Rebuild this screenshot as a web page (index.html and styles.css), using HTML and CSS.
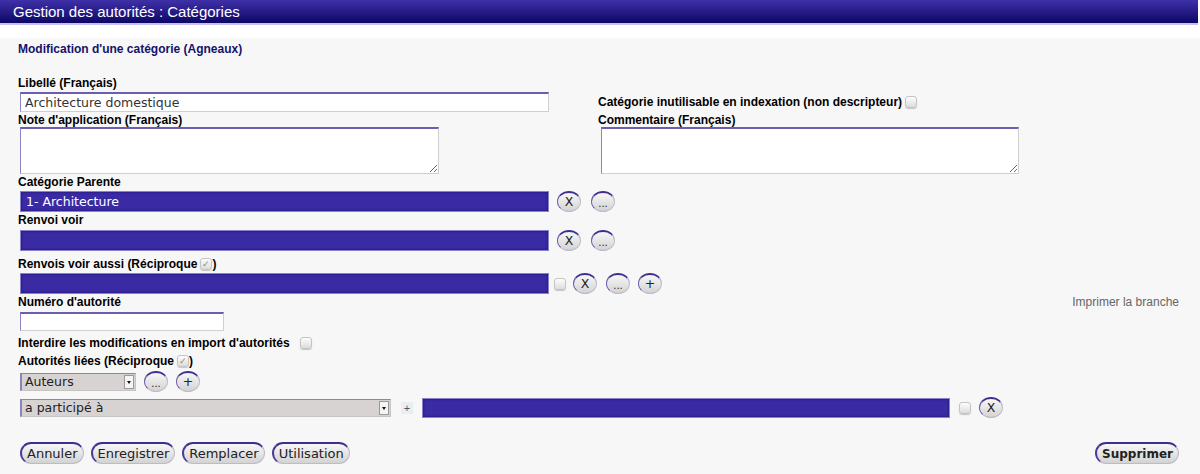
FILE: index.html
```html
<!DOCTYPE html>
<html lang="fr">
<head>
<meta charset="utf-8">
<title>Gestion des autorités : Catégories</title>
<link rel="stylesheet" href="styles.css">
</head>
<body>
<div class="header">Gestion des autorités : Catégories</div>
<div class="content">
  <div class="title">Modification d'une catégorie (Agneaux)</div>

  <div class="two row1">
    <div class="col">
      <div class="lbl">Libellé (Français)</div>
      <input class="txt libelle" type="text" value="Architecture domestique">
    </div>
    <div class="col right r1">
      <div class="lbl">Catégorie inutilisable en indexation (non descripteur)<span class="cb g3"></span></div>
    </div>
  </div>

  <div class="two row2">
    <div class="col">
      <div class="lbl">Note d'application (Français)</div>
      <textarea class="area"></textarea>
    </div>
    <div class="col right">
      <div class="lbl">Commentaire (Français)</div>
      <textarea class="area area-r"></textarea>
    </div>
  </div>

  <div class="lbl m1">Catégorie Parente</div>
  <div class="line m2">
    <input class="sel" type="text" value="1- Architecture">
    <span class="rbtn g8">X</span>
    <span class="rbtn dots g10">...</span>
  </div>

  <div class="lbl m1">Renvoi voir</div>
  <div class="line m3">
    <input class="sel" type="text" value="">
    <span class="rbtn g8">X</span>
    <span class="rbtn dots g10">...</span>
  </div>

  <div class="lbl m6">Renvois voir aussi (Réciproque<span class="cb on g3">&#10003;</span>)</div>
  <div class="line m2">
    <input class="sel" type="text" value="">
    <span class="cb g5"></span>
    <span class="rbtn g7">X</span>
    <span class="rbtn dots g9">...</span>
    <span class="rbtn g8">+</span>
  </div>

  <div class="numrow m1">
    <div>
      <div class="lbl">Numéro d'autorité</div>
      <input class="txt num" type="text" value="">
    </div>
    <div class="print">Imprimer la branche</div>
  </div>

  <div class="lbl m5">Interdire les modifications en import d'autorités<span class="cb g10"></span></div>
  <div class="lbl m4">Autorités liées (Réciproque<span class="cb on g3">&#10003;</span>)</div>

  <div class="line m3">
    <div class="select s-aut"><span class="sv">Auteurs</span><span class="arr"></span></div>
    <span class="rbtn dots g8">...</span>
    <span class="rbtn g8">+</span>
  </div>

  <div class="line m5">
    <div class="select s-rel"><span class="sv">a participé à</span><span class="arr"></span></div>
    <span class="plus g10">+</span>
    <input class="sel sel2" type="text" value="">
    <span class="cb g9"></span>
    <span class="rbtn g8">X</span>
  </div>

  <div class="actions">
    <div class="left-actions">
      <span class="btn">Annuler</span>
      <span class="btn">Enregistrer</span>
      <span class="btn">Remplacer</span>
      <span class="btn">Utilisation</span>
    </div>
    <span class="btn bold">Supprimer</span>
  </div>
</div>
</body>
</html>
```

FILE: styles.css
```css
html, body {
  margin: 0;
  padding: 0;
  background: #ffffff;
  font-family: "Liberation Sans", Arial, sans-serif;
  color: #000;
}

.header {
  height: 23px;
  margin-right: 2px;
  background: linear-gradient(#3f31a8, #0d0766);
  border-bottom: 2px solid #c6bff0;
  color: #ffffff;
  font-size: 15px;
  line-height: 23px;
  padding-left: 13px;
}

.content {
  margin-top: 13px;
  background: #f7f7f7;
  padding: 4px 21px 0 18px;
  height: 436px;
  box-sizing: border-box;
}

.title {
  font-size: 12px;
  font-weight: bold;
  color: #16126a;
  line-height: 14px;
  height: 14px;
}

.lbl {
  display: flex;
  align-items: center;
  height: 14px;
  font-size: 12px;
  font-weight: bold;
  line-height: 14px;
  white-space: pre;
}

.two {
  display: grid;
  grid-template-columns: 580px 1fr;
}
.row1 { margin-top: 20px; }
.row2 { margin-top: 1px; }
.r1 { padding-top: 19px; }

.txt {
  display: block;
  box-sizing: border-box;
  background: #fff;
  border: 1px solid #cfcfcf;
  border-top: 2px solid #6a5db4;
  border-left: 1px solid #8d84c4;
  font-family: "DejaVu Sans", sans-serif;
  font-size: 12.5px;
  color: #333;
  padding: 0 4px;
  margin: 2px 0 0 2px;
  outline: none;
}
.libelle { width: 529px; height: 20px; }
.num { width: 204px; height: 19px; margin-top: 3px; }

.area {
  display: block;
  box-sizing: border-box;
  width: 419px;
  height: 47px;
  margin: 0 0 0 2px;
  background: #fff;
  border: 1px solid #cfcfcf;
  border-top: 2px solid #6a5db4;
  border-left: 1px solid #8d84c4;
  resize: both;
  outline: none;
}
.area-r { width: 418px; margin-left: 3px; }

.m1 { margin-top: 1px; }
.m2 { margin-top: 2px; }
.m3 { margin-top: 3px; }
.m4 { margin-top: 4px; }
.m5 { margin-top: 5px; }
.m6 { margin-top: 6px; }

.line {
  display: flex;
  align-items: center;
  padding-left: 2px;
}

.sel {
  box-sizing: border-box;
  width: 529px;
  height: 21px;
  background: #3a2ba5;
  border: 1px solid #8a82c8;
  box-shadow: inset 0 0 3px #1b0f72;
  color: #ffffff;
  font-family: "DejaVu Sans", sans-serif;
  font-size: 12.5px;
  padding: 0 5px;
  margin: 0;
  outline: none;
}
.sel2 { width: 528px; height: 20px; }

.rbtn {
  display: inline-flex;
  align-items: center;
  justify-content: center;
  box-sizing: border-box;
  width: 24px;
  height: 21px;
  border-radius: 50%;
  border: 1px solid #bdbacb;
  border-top: 2px solid #3e2f8e;
  border-left: 1px solid #6a5ca8;
  background: linear-gradient(#f7f7f7, #d3d3d3);
  font-family: "DejaVu Sans", sans-serif;
  font-size: 12.5px;
  color: #222;
  line-height: 1;
}
.dots { font-size: 10px; padding-top: 3px; }

.g3 { margin-left: 3px; }
.g5 { margin-left: 5px; }
.g7 { margin-left: 7px; }
.g8 { margin-left: 8px; }
.g9 { margin-left: 9px; }
.g10 { margin-left: 10px; }

.cb {
  display: inline-flex;
  align-items: center;
  justify-content: center;
  box-sizing: border-box;
  width: 12px;
  height: 12px;
  border: 1px solid #c4c4c4;
  border-radius: 3px;
  background: linear-gradient(#fdfdfd, #dcdcdc);
  box-shadow: 0 1px 1px rgba(0,0,0,0.2);
  font-size: 9px;
  line-height: 1;
  color: #888;
  font-weight: normal;
}

.numrow {
  display: flex;
  justify-content: space-between;
  align-items: flex-start;
}
.print {
  font-size: 12px;
  line-height: 14px;
  color: #666;
}

.select {
  display: flex;
  align-items: center;
  box-sizing: border-box;
  height: 18px;
  background: #d8d3d3;
  border: 1px solid #c8c4c4;
  border-top: 1px solid #8c84b8;
  border-left: 2px solid #8c84b8;
  font-family: "DejaVu Sans", sans-serif;
  font-size: 12.5px;
  color: #222;
  padding-left: 3px;
}
.sv { flex: 1; }
.s-aut { width: 116px; }
.s-rel { width: 371px; }
.arr {
  position: relative;
  width: 10px;
  height: 14px;
  margin-right: 1px;
  background: #f5f5f5;
  border: 1px solid #999;
  box-sizing: border-box;
}
.arr::after {
  content: "";
  position: absolute;
  left: 2px;
  top: 5px;
  border-left: 2.5px solid transparent;
  border-right: 2.5px solid transparent;
  border-top: 3px solid #111;
}

.plus {
  display: inline-flex;
  align-items: center;
  justify-content: center;
  width: 12px;
  height: 12px;
  background: #e9eef3;
  color: #556;
  font-size: 11px;
  margin-right: 9px;
}

.actions {
  display: flex;
  justify-content: space-between;
  align-items: center;
  margin-top: 24px;
  padding-left: 2px;
}
.left-actions {
  display: flex;
  gap: 7px;
}
.btn {
  display: inline-flex;
  align-items: center;
  box-sizing: border-box;
  height: 22px;
  padding: 0 5px;
  border-radius: 11px;
  border: 1px solid #bdbacb;
  border-top: 2px solid #3e2f8e;
  border-left: 2px solid #4a3b98;
  background: linear-gradient(#f7f7f7, #d3d3d3);
  font-family: "DejaVu Sans", sans-serif;
  font-size: 13px;
  color: #222;
}
.bold { font-weight: bold; font-size: 12px; padding: 0 5px; }
```
